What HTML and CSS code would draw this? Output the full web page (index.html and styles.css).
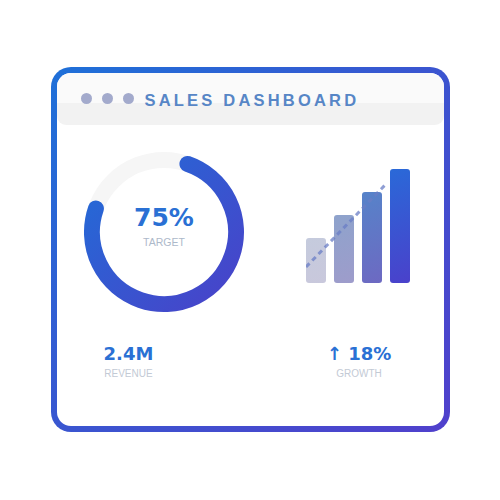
FILE: index.html
```html
<!DOCTYPE html>
<html>
<head>
<meta charset="utf-8">
<link rel="stylesheet" href="styles.css">
</head>
<body>
<div class="page">
  <div class="card">
    <div class="header">
      <span class="dot"></span><span class="dot"></span><span class="dot"></span>
      <span class="title">SALES DASHBOARD</span>
    </div>
    <div class="charts">
      <div class="donut">
        <svg class="ring" width="160" height="160" viewBox="0 0 160 160">
          <defs>
            <linearGradient id="rg" x1="0" y1="0" x2="160" y2="160" gradientUnits="userSpaceOnUse">
              <stop offset="0" stop-color="#1f6fd8"/>
              <stop offset="1" stop-color="#4c3fc8"/>
            </linearGradient>
          </defs>
          <circle cx="80" cy="80" r="72" fill="none" stroke="#f6f6f6" stroke-width="16"/>
          <path d="M103.44 11.92 A72 72 0 1 1 11.92 56.56" fill="none" stroke="url(#rg)" stroke-width="16" stroke-linecap="round"/>
        </svg>
        <div class="donut-label">
          <div class="big">75%</div>
          <div class="small">TARGET</div>
        </div>
      </div>
      <div class="bars">
        <div class="bar b1"></div>
        <div class="bar b2"></div>
        <div class="bar b3"></div>
        <div class="bar b4"></div>
        <svg class="trend" width="103" height="114" viewBox="0 0 103 114">
          <line x1="0" y1="98" x2="81" y2="14" stroke="#6a7ec6" stroke-opacity="0.75" stroke-width="3" stroke-dasharray="5 4"/>
        </svg>
      </div>
    </div>
    <div class="stats">
      <div class="stat s1">
        <div class="value">2.4M</div>
        <div class="label">REVENUE</div>
      </div>
      <div class="stat s2">
        <div class="value">↑ 18%</div>
        <div class="label">GROWTH</div>
      </div>
    </div>
  </div>
</div>
</body>
</html>
```

FILE: styles.css
```css
html, body {
  margin: 0;
  padding: 0;
  background: #ffffff;
}

.page {
  width: 500px;
  height: 500px;
  padding: 67px 0 0 51px;
  box-sizing: border-box;
}

.card {
  width: 399px;
  height: 365px;
  box-sizing: border-box;
  border: 6px solid transparent;
  border-radius: 20px;
  background:
    linear-gradient(#ffffff, #ffffff) padding-box,
    linear-gradient(135deg, #1e70d8 0%, #3a55d0 50%, #5040cc 100%) border-box;
  display: flex;
  flex-direction: column;
}

.header {
  height: 52px;
  display: flex;
  align-items: center;
  padding-left: 23.5px;
  border-radius: 14px 14px 9px 9px;
  background: linear-gradient(#fafafa 0, #fafafa 30px, #f2f2f2 30px, #f2f2f2 100%);
}

.dot {
  width: 11px;
  height: 11px;
  border-radius: 50%;
  background: #a3aacc;
  margin-right: 10px;
  margin-bottom: 2px;
}

.dot:nth-child(3) {
  margin-right: 11px;
}

.title {
  font-family: "Liberation Sans", Arial, sans-serif;
  font-weight: bold;
  font-size: 16.5px;
  line-height: 20px;
  letter-spacing: 3.2px;
  color: #5786c6;
  margin-top: 2px;
}

.charts {
  display: flex;
  align-items: flex-start;
  padding: 27px 0 0 27px;
}

.donut {
  width: 160px;
  height: 160px;
  display: grid;
}

.ring, .donut-label {
  grid-area: 1 / 1;
}

.donut-label {
  padding-top: 51.6px;
  text-align: center;
}

.big {
  font-family: "DejaVu Sans", sans-serif;
  font-weight: bold;
  font-size: 25px;
  line-height: 28px;
  color: #2a70d4;
}

.small {
  margin-top: 4px;
  font-family: "Liberation Sans", Arial, sans-serif;
  font-size: 10.5px;
  line-height: 12px;
  color: #adb9ca;
}

.bars {
  position: relative;
  margin: 17px 0 0 62px;
  height: 114px;
  display: flex;
  align-items: flex-end;
  gap: 8px;
}

.bar {
  width: 20px;
  border-radius: 3px;
}

.b1 { height: 45px;  background: linear-gradient(160deg, #c5cbdd, #c9c8dc); }
.b2 { height: 68px;  background: linear-gradient(160deg, #8ea3cc, #9e9ccb); }
.b3 { height: 91px;  background: linear-gradient(160deg, #5683c9, #6d69c2); }
.b4 { height: 114px; background: linear-gradient(160deg, #2a69d8, #4a41cb); }

.trend {
  position: absolute;
  left: 0;
  top: 0;
}

.stats {
  display: flex;
  margin-top: 30.8px;
  padding-left: 27px;
}

.stat {
  width: 89px;
  text-align: center;
}

.s2 {
  margin-left: 141.5px;
}

.value {
  font-family: "DejaVu Sans", sans-serif;
  font-weight: bold;
  font-size: 18px;
  line-height: 22px;
  color: #2a70d4;
}

.label {
  margin-top: 3px;
  font-family: "Liberation Sans", Arial, sans-serif;
  font-size: 10px;
  line-height: 12px;
  color: #c3cad5;
}
```
